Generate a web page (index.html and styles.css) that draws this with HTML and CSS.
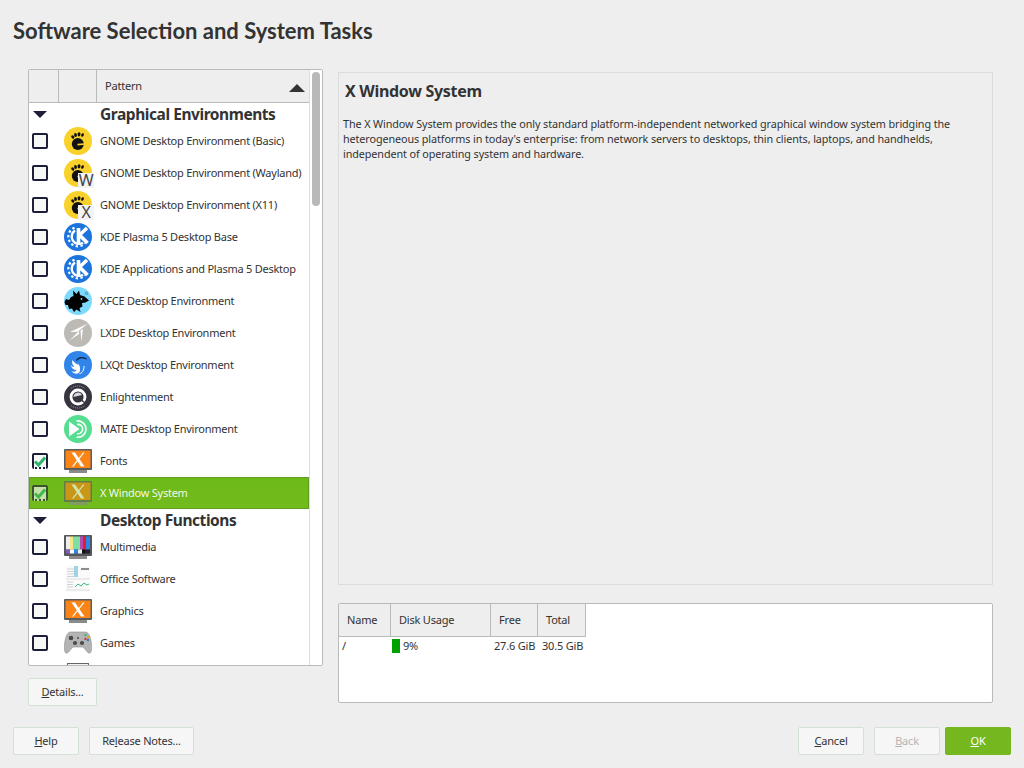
FILE: index.html
```html
<!DOCTYPE html>
<html lang="en">
  <head>
    <meta charset="UTF-8" />
    <title>Software Selection and System Tasks</title>
    <link rel="stylesheet" href="styles.css">
  </head>
  <body>
    <!-- Shared icons -->
    <svg class="defs" width="0" height="0">
      <defs>
        <symbol id="i-gnome" viewBox="0 0 28 28">
          <circle cx="14" cy="14" r="14" fill="#f9d12b" />
          <ellipse cx="8.800" cy="10" rx="1.400" ry="1.900" fill="#111" transform="rotate(-35 8.800 10)" />
          <ellipse cx="11.500" cy="8" rx="1.400" ry="2.100" fill="#111" transform="rotate(-10 11.500 8)" />
          <ellipse cx="15" cy="7.300" rx="1.500" ry="2.100" fill="#111" transform="rotate(8 15 7.300)" />
          <ellipse cx="18.500" cy="8" rx="1.300" ry="1.900" fill="#111" transform="rotate(25 18.500 8)" />
          <ellipse cx="13.800" cy="17" rx="6" ry="6" fill="#111" />
          <path d="M13.500 17.600l7-.6" fill="none" stroke="#f9d12b" stroke-width="1.600" />
        </symbol>
        <symbol id="i-kde" viewBox="0 0 28 28">
          <circle cx="14" cy="14" r="14" fill="#1d74dc" />
          <path d="M11 7.500a7 7 0 1 0 8 12.200" fill="none" stroke="#fff" stroke-width="2.400" />
          <path d="M10.500 4.800a9.600 9.600 0 1 0 10.500 15.500" fill="none" stroke="#fff" stroke-width="2.200" stroke-dasharray="2.400 2.400" />
          <path d="M14.500 5v15M23 5l-7.500 7 8 8" fill="none" stroke="#fff" stroke-width="3.600" />
        </symbol>
        <symbol id="i-xfce" viewBox="0 0 28 28">
          <circle cx="14" cy="14" r="14" fill="#7edafc" />
          <path d="M0.500 15L2 12 5 13 7 10 9.500 9 9 3.500 12.500 7 15 3.500 16 8 20.500 9.500 25 13.500 21.500 15.500 18 16 18.500 19.500 15.500 21 16.500 25 12.500 22.500 10 25 8 21.500 5 22 4 18 1.500 18z" fill="#000" />
          <circle cx="17.500" cy="12" r=".9" fill="#7edafc" />
          <path d="M21 7.500l1.500-3M23 8l.5-2.500" stroke="#333" stroke-width=".5" />
        </symbol>
        <symbol id="i-lxde" viewBox="0 0 28 28">
          <circle cx="14" cy="14" r="14" fill="#bdb9b5" />
          <path d="M24 4.500L6 13l7.500-.3zM15 12L5.500 21.500l9.500-6.500zM16.500 11.500l.8 11 1.700-12.500z" fill="#fff" />
        </symbol>
        <symbol id="i-lxqt" viewBox="0 0 28 28">
          <circle cx="14" cy="14" r="14" fill="#3185e8" />
          <path d="M12.500 9.500c2-3 6-3.500 10-1.500" fill="none" stroke="#10233c" stroke-width="1.300" />
          <path d="M14 10c.5 4 3.500 7 1.500 11-2 3-6 2-8-1 2 1 4 1 5-1-3 0-5-2-6-5 2 2 3 2 4 2-2-2-3-4-2-7 2 3 4 4 6 5 0-1 0-2-.5-4z" fill="#fff" />
          <path d="M15.500 22.500c2.500 0 4.500-3 4.500-7.500" fill="none" stroke="#fff" stroke-width="1" />
        </symbol>
        <symbol id="i-enl" viewBox="0 0 28 28">
          <circle cx="14" cy="14" r="14" fill="#36353f" />
          <circle cx="14" cy="14" r="7" fill="none" stroke="#fff" stroke-width="2.800" />
          <path d="M9.500 14a4.500 4.500 0 0 1 8.500-2z" fill="#d8d8dc" />
          <path d="M15 15l6 5" stroke="#36353f" stroke-width="1.500" />
          <path d="M7 5.500a11 11 0 0 1 14 0M7 22.500a11 11 0 0 0 14 0" fill="none" stroke="#a9a9b0" stroke-width="1" stroke-dasharray="1 1.200" />
        </symbol>
        <symbol id="i-mate" viewBox="0 0 28 28">
          <circle cx="14" cy="14" r="14" fill="#55de90" />
          <path d="M5 6.500L15.500 14 5 21.500z" fill="#fff" />
          <path d="M12.500 6a8.200 8.200 0 1 1 0 16.200M13 9.500a4.700 4.700 0 1 1 0 9.200" fill="none" stroke="#fff" stroke-width="1.600" />
        </symbol>
        <symbol id="i-xorg" viewBox="0 0 28 26">
          <path d="M5 20h18v5H5z" fill="#8a8a8a" />
          <rect x="0" y="1" width="28" height="21" rx="1" fill="#5a5d60" />
          <rect x="1.500" y="2.500" width="25" height="17.500" fill="#fb8416" />
          <path d="M7.500 4.500h3.500l9.500 14h-3.500zM19 4.500h1.500l-11 14H8z" fill="#fff" />
        </symbol>
        <symbol id="i-media" viewBox="0 0 28 26">
          <path d="M5 20h18v5H5z" fill="#8a8a8a" />
          <rect x="0" y="1" width="28" height="21" rx="1" fill="#55585b" />
          <rect x="2" y="2.500" width="4" height="13" fill="#eee" />
          <rect x="6" y="2.500" width="3" height="13" fill="#fbe58b" />
          <rect x="9" y="2.500" width="7" height="13" fill="#7cdfa3" />
          <rect x="16" y="2.500" width="3" height="13" fill="#b14bb0" />
          <rect x="19" y="2.500" width="3" height="13" fill="#e31b2a" />
          <rect x="22" y="2.500" width="4" height="13" fill="#2f86e6" />
          <rect x="2" y="15.500" width="4" height="4" fill="#7e5fb0" />
          <rect x="6" y="15.500" width="4" height="4" fill="#fff" />
          <rect x="10" y="15.500" width="4" height="4" fill="#2f86e6" />
          <rect x="14" y="15.500" width="4" height="4" fill="#eee" />
          <rect x="18" y="15.500" width="3" height="4" fill="#111" />
          <rect x="21" y="15.500" width="5" height="4" fill="#223" />
        </symbol>
        <symbol id="i-office" viewBox="0 0 28 28">
          <rect x="2" y="1" width="24" height="26" fill="#fafafa" />
          <path d="M3 4h7M3 6.500h7M3 9h7M3 11.500h7M3 17h6M3 19.500h6M3 22h6" stroke="#cfd3d3" stroke-width="1" />
          <rect x="10" y="1" width="4" height="11" fill="#9fd3e8" />
          <path d="M17 4h8" stroke="#666" stroke-width="1.500" />
          <path d="M2 14h24M2 25h24" stroke="#ddd" stroke-width="1" />
          <path d="M11 22l3-3 3 2 3-3 3 2 2-1" fill="none" stroke="#2fbf78" stroke-width="1" />
        </symbol>
        <symbol id="i-games" viewBox="0 0 28 24">
          <path d="M7 1h14c3 0 5 3 6 9 1 5 1 11-1 12-2 1-4-3-7-6H9c-3 3-5 7-7 6-2-1-2-7-1-12C2 4 4 1 7 1z" fill="#b4b4b4" stroke="#8d8d8d" stroke-width=".6" />
          <circle cx="7" cy="7" r="2.300" fill="#4a4a4a" />
          <circle cx="11" cy="12" r="2.100" fill="#4a4a4a" />
          <circle cx="18" cy="12" r="2.100" fill="#4a4a4a" />
          <circle cx="14" cy="7" r="1" fill="#4a4a4a" />
          <circle cx="24" cy="6" r="1.200" fill="#e2a52b" />
          <circle cx="21.500" cy="8" r="1.200" fill="#d33" />
          <circle cx="21.500" cy="4" r="1.200" fill="#3b7" />
          <circle cx="24" cy="9" r="1.200" fill="#37c" />
        </symbol>
      </defs>
    </svg>

    <div class="app">
      <h1 class="page-title">Software Selection and System Tasks</h1>

      <div class="content">
        <!-- Pattern list -->
        <div class="left">
          <div class="list">
            <div class="list-main">
              <div class="list-head">
                <div class="head-cell head-check"></div>
                <div class="head-cell head-icon"></div>
                <div class="head-cell head-name">
                  <span class="head-label">Pattern</span>
                  <span class="sort-up"></span>
                </div>
              </div>

              <div class="group"><span class="arrow-down"></span><span class="group-name">Graphical Environments</span></div>

              <div class="row">
                <span class="check"></span>
                <span class="icon"><svg width="28" height="28"><use href="#i-gnome" /></svg></span>
                <span class="label">GNOME Desktop Environment (Basic)</span>
              </div>
              <div class="row">
                <span class="check"></span>
                <span class="icon"><svg width="28" height="28"><use href="#i-gnome" /></svg><span class="badge">W</span></span>
                <span class="label">GNOME Desktop Environment (Wayland)</span>
              </div>
              <div class="row">
                <span class="check"></span>
                <span class="icon"><svg width="28" height="28"><use href="#i-gnome" /></svg><span class="badge">X</span></span>
                <span class="label">GNOME Desktop Environment (X11)</span>
              </div>
              <div class="row">
                <span class="check"></span>
                <span class="icon"><svg width="28" height="28"><use href="#i-kde" /></svg></span>
                <span class="label">KDE Plasma 5 Desktop Base</span>
              </div>
              <div class="row">
                <span class="check"></span>
                <span class="icon"><svg width="28" height="28"><use href="#i-kde" /></svg></span>
                <span class="label">KDE Applications and Plasma 5 Desktop</span>
              </div>
              <div class="row">
                <span class="check"></span>
                <span class="icon"><svg width="28" height="28"><use href="#i-xfce" /></svg></span>
                <span class="label">XFCE Desktop Environment</span>
              </div>
              <div class="row">
                <span class="check"></span>
                <span class="icon"><svg width="28" height="28"><use href="#i-lxde" /></svg></span>
                <span class="label">LXDE Desktop Environment</span>
              </div>
              <div class="row">
                <span class="check"></span>
                <span class="icon"><svg width="28" height="28"><use href="#i-lxqt" /></svg></span>
                <span class="label">LXQt Desktop Environment</span>
              </div>
              <div class="row">
                <span class="check"></span>
                <span class="icon"><svg width="28" height="28"><use href="#i-enl" /></svg></span>
                <span class="label">Enlightenment</span>
              </div>
              <div class="row">
                <span class="check"></span>
                <span class="icon"><svg width="28" height="28"><use href="#i-mate" /></svg></span>
                <span class="label">MATE Desktop Environment</span>
              </div>
              <div class="row">
                <span class="check checked"><svg width="12" height="12" viewBox="0 0 12 12"><path d="M1 6.500l3.500 3.500L11 2.500" fill="none" stroke="#2fb56a" stroke-width="3" /></svg></span>
                <span class="icon"><svg width="28" height="26"><use href="#i-xorg" /></svg></span>
                <span class="label">Fonts</span>
              </div>
              <div class="row selected">
                <span class="check checked"><svg width="12" height="12" viewBox="0 0 12 12"><path d="M1 6.500l3.500 3.500L11 2.500" fill="none" stroke="#2fb56a" stroke-width="3" /></svg></span>
                <span class="icon"><svg width="28" height="26"><use href="#i-xorg" /></svg></span>
                <span class="label">X Window System</span>
              </div>

              <div class="group"><span class="arrow-down"></span><span class="group-name">Desktop Functions</span></div>

              <div class="row">
                <span class="check"></span>
                <span class="icon"><svg width="28" height="26"><use href="#i-media" /></svg></span>
                <span class="label">Multimedia</span>
              </div>
              <div class="row">
                <span class="check"></span>
                <span class="icon"><svg width="28" height="28"><use href="#i-office" /></svg></span>
                <span class="label">Office Software</span>
              </div>
              <div class="row">
                <span class="check"></span>
                <span class="icon"><svg width="28" height="26"><use href="#i-xorg" /></svg></span>
                <span class="label">Graphics</span>
              </div>
              <div class="row">
                <span class="check"></span>
                <span class="icon"><svg width="28" height="24"><use href="#i-games" /></svg></span>
                <span class="label">Games</span>
              </div>
              <div class="row">
                <span class="check"></span>
                <span class="icon icon-cut"></span>
              </div>
            </div>

            <div class="scrollbar"><div class="thumb"></div></div>
          </div>

          <div class="left-actions">
            <button class="btn btn-details"><u>D</u>etails...</button>
          </div>
        </div>

        <!-- Description and disk usage -->
        <div class="right">
          <div class="info">
            <h2 class="info-title">X Window System</h2>
            <p class="info-text">The X Window System provides the only standard platform-independent networked graphical window system bridging the heterogeneous platforms in today's enterprise: from network servers to desktops, thin clients, laptops, and handhelds, independent of operating system and hardware.</p>
          </div>

          <div class="disk">
            <div class="disk-grid">
              <div class="disk-head">Name</div>
              <div class="disk-head">Disk Usage</div>
              <div class="disk-head">Free</div>
              <div class="disk-head">Total</div>
              <div class="disk-cell disk-name">/</div>
              <div class="disk-cell disk-usage"><span class="usage-bar"></span>9%</div>
              <div class="disk-cell disk-free">27.6 GiB</div>
              <div class="disk-cell disk-total">30.5 GiB</div>
            </div>
          </div>
        </div>
      </div>

      <!-- Bottom buttons -->
      <div class="footer">
        <div class="footer-group">
          <button class="btn btn-help"><u>H</u>elp</button>
          <button class="btn btn-notes">Re<u>l</u>ease Notes...</button>
        </div>
        <div class="footer-group">
          <button class="btn btn-cancel"><u>C</u>ancel</button>
          <button class="btn btn-back" disabled><u>B</u>ack</button>
          <button class="btn btn-ok"><u>O</u>K</button>
        </div>
      </div>
    </div>
  </body>
</html>
```

FILE: styles.css
```css
* {
  margin: 0;
  padding: 0;
  box-sizing: border-box;
  font-family: "Noto Sans", "Open Sans", sans-serif;
}

body {
  width: 1024px;
  height: 768px;
  overflow: hidden;
  background-color: #eeeeee;
  color: #333;
  font-size: 11px;
}

.defs {
  position: absolute;
}

.app {
  display: flex;
  flex-direction: column;
  height: 768px;
}

.page-title {
  height: 69px;
  padding: 14px 13px 0;
  font-family: Lato, "Noto Sans", sans-serif;
  font-size: 22px;
  line-height: 34px;
  font-weight: 700;
  color: #333;
}

.content {
  display: flex;
  gap: 15px;
  height: 637px;
  padding: 0 31px 0 28px;
}

/* Pattern list */
.left {
  display: flex;
  flex-direction: column;
  width: 295px;
}

.list {
  display: flex;
  height: 597px;
  background-color: #fff;
  border: 1px solid #b8bcb8;
  border-radius: 2px;
  overflow: hidden;
}

.list-main {
  width: 280px;
}

.list-head {
  display: flex;
  height: 33px;
  background-color: #eeeeee;
  border-bottom: 1px solid #b8bcb8;
}

.head-cell {
  border-right: 1px solid #b8bcb8;
}

.head-check {
  width: 30px;
}

.head-icon {
  width: 38px;
}

.head-name {
  display: flex;
  flex: 1;
  align-items: center;
  justify-content: space-between;
  padding: 0 4px 2px 8px;
  border-right: 0;
}

.head-label {
  letter-spacing: -0.2px;
}

.sort-up {
  width: 0;
  height: 0;
  margin-top: 6px;
  border-left: 8px solid transparent;
  border-right: 8px solid transparent;
  border-bottom: 8px solid #333;
}

.group {
  display: flex;
  align-items: center;
  height: 22px;
  color: #333;
}

.group-name {
  margin-top: -1px;
  font-size: 15.5px;
  font-weight: 700;
  letter-spacing: -0.44px;
  white-space: nowrap;
}

.arrow-down {
  width: 0;
  height: 0;
  margin: 1px 53px 0 4px;
  border-left: 7px solid transparent;
  border-right: 7px solid transparent;
  border-top: 7px solid #1e1e3a;
}

.row {
  display: flex;
  align-items: center;
  height: 32px;
}

.label {
  margin-top: -2px;
  letter-spacing: -0.24px;
  white-space: nowrap;
}

.row.selected {
  background: linear-gradient(#6eb91a, #72bb1c);
  box-shadow: inset 0 0 0 1px #5f9f22;
  color: #f2f7ea;
}

.row.selected .check,
.row.selected .icon {
  opacity: 0.65;
}

.check {
  display: flex;
  align-items: center;
  justify-content: center;
  flex: none;
  width: 16px;
  height: 16px;
  margin-left: 3px;
  background-color: #f5f8f5;
  border: 2px solid #1e1e3a;
  border-radius: 2px;
}

.check.checked {
  border-bottom-style: dotted;
}

.icon {
  position: relative;
  display: flex;
  align-items: center;
  justify-content: center;
  flex: none;
  width: 28px;
  height: 28px;
  margin: 0 8px 0 16px;
}

.icon-cut {
  align-items: flex-start;
}

.icon-cut::before {
  content: "";
  display: block;
  width: 20px;
  height: 26px;
  margin-top: 2px;
  background-color: #f3f3f3;
  border: 1px solid #666;
}

.badge {
  position: absolute;
  left: 14px;
  top: 14px;
  width: 16px;
  height: 15px;
  background-color: #f3f3f5;
  color: #444;
  font-size: 16px;
  line-height: 15px;
  letter-spacing: -0.5px;
  text-align: center;
}

.scrollbar {
  flex: 1;
  padding: 2px 2px 0 2px;
  background-color: #fff;
  border-left: 1px solid #dcdcdc;
}

.thumb {
  width: 8px;
  height: 134px;
  background-color: #b9b9b9;
  border-radius: 4px;
}

.left-actions {
  display: flex;
  margin-top: 12px;
}

/* Buttons */
.btn {
  height: 28px;
  padding-bottom: 2px;
  background-color: #f6f6f6;
  border: 1px solid #d5e0d5;
  border-radius: 2px;
  color: #333;
  font-size: 11px;
  letter-spacing: -0.2px;
}

.btn-details {
  width: 69px;
}

.btn-help {
  width: 66px;
}

.btn-notes {
  width: 105px;
}

.btn-cancel {
  width: 66px;
}

.btn-back {
  width: 66px;
  color: #b5b5b5;
}

.btn-ok {
  width: 66px;
  margin-left: -5px;
  background-color: #74b71e;
  border-color: #74b71e;
  color: #fff;
}

/* Right side */
.right {
  display: flex;
  flex: 1;
  flex-direction: column;
  gap: 18px;
  padding-top: 3px;
}

.info {
  height: 513px;
  padding: 7px 4px;
  border: 1px solid #dcdcdc;
}

.info-title {
  margin: 0 0 14px 2px;
  font-size: 16px;
  line-height: 22px;
  font-weight: 700;
  letter-spacing: -0.3px;
}

.info-text {
  width: 620px;
  font-size: 10.8px;
  line-height: 15px;
  letter-spacing: -0.1px;
}

.disk {
  height: 100px;
  background-color: #fff;
  border: 1px solid #b8bcb8;
  border-radius: 2px;
}

.disk-grid {
  display: grid;
  grid-template-columns: 52px 100px 47px 48px;
  grid-template-rows: 33px auto;
  width: 247px;
  letter-spacing: -0.2px;
}

.disk-head {
  display: flex;
  align-items: center;
  padding: 0 0 2px 8px;
  background-color: #eeeeee;
  border-right: 1px solid #b8bcb8;
  border-bottom: 1px solid #b8bcb8;
}

.disk-cell {
  display: flex;
  align-items: center;
  height: 17px;
  white-space: nowrap;
}

.disk-name {
  padding-left: 3px;
}

.disk-usage {
  padding-left: 1px;
}

.disk-free {
  padding-left: 3px;
}

.disk-total {
  padding-left: 4px;
}

.usage-bar {
  width: 8px;
  height: 14px;
  margin-right: 3px;
  background-color: #00a000;
}

/* Footer */
.footer {
  display: flex;
  justify-content: space-between;
  padding: 21px 13px 0;
}

.footer-group {
  display: flex;
  gap: 10px;
}
```
